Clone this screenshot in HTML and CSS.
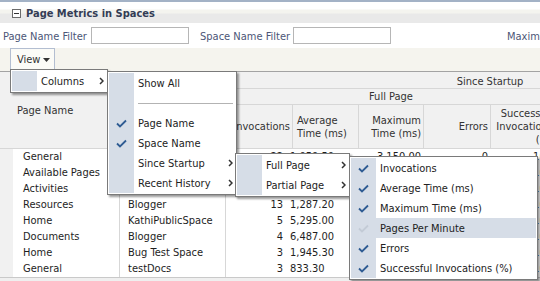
FILE: index.html
```html
<!DOCTYPE html>
<html>
<head>
<meta charset="utf-8">
<link rel="stylesheet" href="styles.css">
</head>
<body>
<div class="page">
  <div class="titlebar">
    <svg class="collapse" width="9" height="9" viewBox="0 0 9 9"><rect x="0.5" y="0.5" width="8" height="8" fill="#fff" stroke="#6b6b6b"/><path d="M2 4.5H7" stroke="#333" stroke-width="1"/></svg>
    <span class="title">Page Metrics in Spaces</span>
  </div>
  <div class="filters">
    <span class="flabel l1">Page Name Filter</span><input class="finput" type="text">
    <span class="flabel l2">Space Name Filter</span><input class="finput" type="text">
    <span class="flabel l3">Maximum Time Filter</span>
  </div>
  <div class="toolbar">
    <div class="viewbtn">View<svg class="dd" width="7" height="4" viewBox="0 0 7 4"><path d="M0 0H7L3.5 4Z" fill="#333"/></svg></div>
  </div>
  <div class="tablewrap">
    <div class="thead">
      <div class="hc gut"></div>
      <div class="hc pname">Page Name</div>
      <div class="hc sname">Space Name</div>
      <div class="hc since">Since Startup</div>
      <div class="hc full">Full Page</div>
      <div class="hc partial">Partial Page</div>
      <div class="hc num r">Invocations</div>
      <div class="hc num l">Average<br>Time (ms)</div>
      <div class="hc num r">Maximum<br>Time (ms)</div>
      <div class="hc num r">Errors</div>
      <div class="hc num r pr3">Successful<br>Invocations<br>(%)</div>
      <div class="hc num r">Invocations</div>
      <div class="hc num r">Average<br>Time (ms)</div>
      <div class="hc num r">Errors</div>
    </div>
    <div class="tbody">
      <div class="row"><div class="c gut"></div><div class="c pn">General</div><div class="c sn">General</div><div class="c inv">22</div><div class="c avg">1,059.50</div><div class="c max">3,150.00</div><div class="c err">0</div><div class="c suc">100</div></div>
      <div class="row"><div class="c gut"></div><div class="c pn">Available Pages</div><div class="c sn">Home</div><div class="c inv">18</div><div class="c avg">1,320.10</div><div class="c max">2,870.00</div><div class="c err">0</div><div class="c suc">100</div></div>
      <div class="row"><div class="c gut"></div><div class="c pn">Activities</div><div class="c sn">Home</div><div class="c inv">15</div><div class="c avg">986.40</div><div class="c max">1,920.00</div><div class="c err">0</div><div class="c suc">100</div></div>
      <div class="row"><div class="c gut"></div><div class="c pn">Resources</div><div class="c sn">Blogger</div><div class="c inv">13</div><div class="c avg">1,287.20</div><div class="c max">2,480.00</div><div class="c err">0</div><div class="c suc">100</div></div>
      <div class="row"><div class="c gut"></div><div class="c pn">Home</div><div class="c sn">KathiPublicSpace</div><div class="c inv">5</div><div class="c avg">5,295.00</div><div class="c max">9,750.00</div><div class="c err">0</div><div class="c suc">100</div></div>
      <div class="row"><div class="c gut"></div><div class="c pn">Documents</div><div class="c sn">Blogger</div><div class="c inv">4</div><div class="c avg">6,487.00</div><div class="c max">11,200.00</div><div class="c err">0</div><div class="c suc">100</div></div>
      <div class="row"><div class="c gut"></div><div class="c pn">Home</div><div class="c sn">Bug Test Space</div><div class="c inv">3</div><div class="c avg">1,945.30</div><div class="c max">3,120.00</div><div class="c err">0</div><div class="c suc">100</div></div>
      <div class="row"><div class="c gut"></div><div class="c pn">General</div><div class="c sn">testDocs</div><div class="c inv">3</div><div class="c avg">833.30</div><div class="c max">1,010.00</div><div class="c err">0</div><div class="c suc">100</div></div>
    </div>
  </div>
</div>

<div class="menu m1">
  <div class="mi"><span class="ic"></span><span class="lbl">Columns</span><svg class="arr" width="5" height="8" viewBox="0 0 5 8"><path d="M1 1L4 4L1 7" fill="none" stroke="#333" stroke-width="1.5"/></svg></div>
</div>

<div class="menu m2">
  <div class="mi"><span class="ic"></span><span class="lbl">Show All</span></div>
  <div class="mi sep"><span class="ic"></span><span class="sepline"></span></div>
  <div class="mi"><span class="ic"><svg class="chk" width="11" height="9" viewBox="0 0 11 9"><path d="M1 4.5L4 7.5L10 1.5" fill="none" stroke="#2f5c93" stroke-width="1.8"/></svg></span><span class="lbl">Page Name</span></div>
  <div class="mi"><span class="ic"><svg class="chk" width="11" height="9" viewBox="0 0 11 9"><path d="M1 4.5L4 7.5L10 1.5" fill="none" stroke="#2f5c93" stroke-width="1.8"/></svg></span><span class="lbl">Space Name</span></div>
  <div class="mi"><span class="ic"></span><span class="lbl">Since Startup</span><svg class="arr" width="5" height="8" viewBox="0 0 5 8"><path d="M1 1L4 4L1 7" fill="none" stroke="#333" stroke-width="1.5"/></svg></div>
  <div class="mi"><span class="ic"></span><span class="lbl">Recent History</span><svg class="arr" width="5" height="8" viewBox="0 0 5 8"><path d="M1 1L4 4L1 7" fill="none" stroke="#333" stroke-width="1.5"/></svg></div>
</div>

<div class="menu m3">
  <div class="mi"><span class="ic"></span><span class="lbl">Full Page</span><svg class="arr" width="5" height="8" viewBox="0 0 5 8"><path d="M1 1L4 4L1 7" fill="none" stroke="#333" stroke-width="1.5"/></svg></div>
  <div class="mi"><span class="ic"></span><span class="lbl">Partial Page</span><svg class="arr" width="5" height="8" viewBox="0 0 5 8"><path d="M1 1L4 4L1 7" fill="none" stroke="#333" stroke-width="1.5"/></svg></div>
</div>

<div class="menu m4">
  <div class="mi"><span class="ic"><svg class="chk" width="11" height="9" viewBox="0 0 11 9"><path d="M1 4.5L4 7.5L10 1.5" fill="none" stroke="#2f5c93" stroke-width="1.8"/></svg></span><span class="lbl">Invocations</span></div>
  <div class="mi"><span class="ic"><svg class="chk" width="11" height="9" viewBox="0 0 11 9"><path d="M1 4.5L4 7.5L10 1.5" fill="none" stroke="#2f5c93" stroke-width="1.8"/></svg></span><span class="lbl">Average Time (ms)</span></div>
  <div class="mi"><span class="ic"><svg class="chk" width="11" height="9" viewBox="0 0 11 9"><path d="M1 4.5L4 7.5L10 1.5" fill="none" stroke="#2f5c93" stroke-width="1.8"/></svg></span><span class="lbl">Maximum Time (ms)</span></div>
  <div class="mi hl"><span class="ic"><svg class="chk" width="11" height="9" viewBox="0 0 11 9"><path d="M1 4.5L4 7.5L10 1.5" fill="none" stroke="#c3cbd6" stroke-width="1.8"/></svg></span><span class="lbl">Pages Per Minute</span></div>
  <div class="mi"><span class="ic"><svg class="chk" width="11" height="9" viewBox="0 0 11 9"><path d="M1 4.5L4 7.5L10 1.5" fill="none" stroke="#2f5c93" stroke-width="1.8"/></svg></span><span class="lbl">Errors</span></div>
  <div class="mi"><span class="ic"><svg class="chk" width="11" height="9" viewBox="0 0 11 9"><path d="M1 4.5L4 7.5L10 1.5" fill="none" stroke="#2f5c93" stroke-width="1.8"/></svg></span><span class="lbl">Successful Invocations (%)</span></div>
</div>
</body>
</html>
```

FILE: styles.css
```css
* { box-sizing: border-box; }
html, body { margin: 0; padding: 0; }
body {
  width: 540px;
  height: 281px;
  overflow: hidden;
  position: relative;
  background: #efefef;
  font-family: "DejaVu Sans Condensed", "DejaVu Sans", "Liberation Sans", sans-serif;
  font-size: 11px;
  color: #222;
}
.page { width: 540px; }

.titlebar {
  height: 23px;
  border-top: 2px solid #a3b2c6;
  background: linear-gradient(to bottom, #ffffff 0px, #ffffff 7px, #f4f4ef 8px, #f4f4ef 11px, #e9e9e9 12px, #e9e9e9 100%);
  display: flex;
  align-items: center;
  padding: 2px 0 0 12px;
}
.collapse { display: block; }
.title {
  margin-left: 5px;
  font-weight: bold;
  font-size: 11px;
  color: #333c55;
  white-space: nowrap;
}

.filters {
  height: 25px;
  background: #fff;
  display: flex;
  align-items: center;
  padding-left: 3px;
  white-space: nowrap;
  overflow: hidden;
}
.flabel { color: #4c5677; flex: none; padding-top: 2px; }
.l1 { width: 88px; }
.l2 { width: 93px; margin-left: 11px; }
.l3 { margin-left: 116px; }
.finput {
  flex: none;
  width: 98px;
  height: 17px;
  margin: 0;
  padding: 0;
  border: 1px solid #b6b6b6;
  background: #fff;
}

.toolbar {
  height: 23px;
  background: #f5f4ee;
  display: flex;
}
.viewbtn {
  margin-left: 10px;
  width: 45px;
  height: 22px;
  border: 1px solid #b3bed1;
  background: #fbfbf7;
  display: flex;
  align-items: center;
  padding-left: 6px;
  color: #333;
}
.dd { margin-left: 3px; margin-top: 2px; }

.tablewrap {
  width: 540px;
  overflow: hidden;
  background: #efefef;
}
.thead {
  display: grid;
  grid-template-columns: 13px 107px 106px 67px 66px 65px 67px 66px 66px 66px 66px;
  grid-template-rows: 17px 16px 44px;
  width: max-content;
  background: #f1f1f1;
  border-top: 1px solid #a3a3a3;
  color: #333;
}
.hc {
  border-right: 1px solid #d7d7d7;
  border-bottom: 1px solid #d7d7d7;
  display: flex;
  align-items: center;
  line-height: 13px;
  white-space: nowrap;
  overflow: hidden;
}
.hc.gut { grid-row: 1 / 4; grid-column: 1; border-right: none; background: #f1f1f1; }
.pname { grid-row: 1 / 4; grid-column: 2; padding-left: 4px; }
.sname { grid-row: 1 / 4; grid-column: 3; padding-left: 4px; }
.since { grid-row: 1; grid-column: 4 / span 8; justify-content: center; padding-top: 3px; }
.full { grid-row: 2; grid-column: 4 / span 5; justify-content: center; }
.partial { grid-row: 2; grid-column: 9 / span 3; justify-content: center; }
.num { grid-row: 3; }
.num.r { justify-content: flex-end; text-align: right; padding-right: 2px; }
.num.l { justify-content: flex-start; text-align: left; padding-left: 4px; }
.num.pr3 { padding-right: 3px; }

.tbody {
  width: 540px;
  border-bottom: 1px solid #c9c9c9;
}
.row {
  display: grid;
  grid-template-columns: 13px 107px 106px 64px 66px 66px 67px 66px;
  height: 16px;
  background: #fff;
  color: #1e1e1e;
}
.c { line-height: 16px; white-space: nowrap; overflow: hidden; }
.c.gut { background: #f1f1f1; }
.pn { padding-left: 10px; border-right: 1px solid #d7d7d7; }
.sn { padding-left: 8px; border-right: 1px solid #d7d7d7; }
.inv { text-align: right; padding-right: 7px; }
.avg { text-align: left; padding-left: 0; }
.max { text-align: right; padding-right: 1px; }
.err { text-align: right; padding-right: 1px; }
.suc { text-align: right; padding-right: 3px; }

.menu {
  position: absolute;
  background: #fff;
  border: 1px solid #7a7a7a;
  box-shadow: 2px 2px 2px rgba(0, 0, 0, 0.4);
  padding: 1px;
  color: #222;
}
.m1 { left: 10px; top: 69px; width: 98px; }
.m2 { left: 107px; top: 71px; width: 130px; }
.m3 { left: 235px; top: 153px; width: 115px; }
.m4 { left: 349px; top: 156px; width: 189px; }

.mi {
  display: flex;
  align-items: center;
  height: 20px;
}
.mi.hl { background: #d6dde7; }
.ic {
  flex: none;
  width: 25px;
  align-self: stretch;
  background: #d6dde7;
  display: flex;
  align-items: center;
  justify-content: center;
}
.chk { display: block; }
.lbl { flex: 1; padding-left: 4px; white-space: nowrap; }
.arr { flex: none; display: block; margin-right: 2px; }
.sepline {
  flex: 1;
  height: 1px;
  background: #b3b3b3;
  margin: 0 2px 0 4px;
}
```
